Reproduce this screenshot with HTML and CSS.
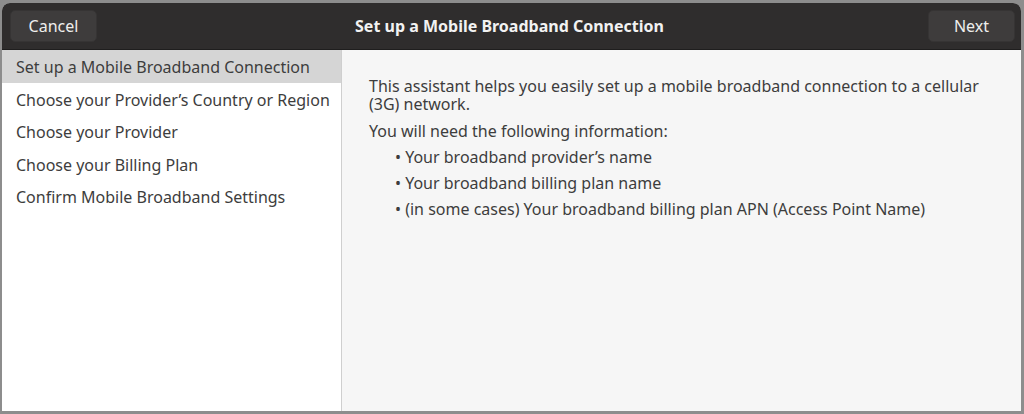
FILE: index.html
```html
<!DOCTYPE html>
<html>
<head>
<meta charset="utf-8">
<link rel="stylesheet" href="styles.css">
</head>
<body>
<div class="window">
  <header class="headerbar">
    <button class="hb-btn">Cancel</button>
    <div class="title">Set up a Mobile Broadband Connection</div>
    <button class="hb-btn">Next</button>
  </header>
  <div class="body">
    <nav class="sidebar">
      <div class="step active">Set up a Mobile Broadband Connection</div>
      <div class="step">Choose your Provider’s Country or Region</div>
      <div class="step">Choose your Provider</div>
      <div class="step">Choose your Billing Plan</div>
      <div class="step">Confirm Mobile Broadband Settings</div>
    </nav>
    <main class="content">
      <p class="intro">This assistant helps you easily set up a mobile broadband connection to a cellular (3G) network.</p>
      <p class="need">You will need the following information:</p>
      <ul class="info">
        <li>• Your broadband provider’s name</li>
        <li>• Your broadband billing plan name</li>
        <li>• (in some cases) Your broadband billing plan APN (Access Point Name)</li>
      </ul>
    </main>
  </div>
</div>
</body>
</html>
```
FILE: styles.css
```css
* { box-sizing: border-box; }
html, body {
  margin: 0;
  height: 100%;
}
body {
  background: #8d8d8d;
  padding: 3px 3px 3px 2px;
  font-family: "Noto Sans", "Open Sans", sans-serif;
  font-size: 16px;
  color: #3d3d3d;
}
.window {
  height: 408px;
  display: flex;
  flex-direction: column;
  border-radius: 8px 8px 0 0;
  overflow: hidden;
  background: #f6f6f6;
}
.headerbar {
  height: 47px;
  flex: none;
  background: #2f2d2d;
  display: flex;
  align-items: center;
  justify-content: space-between;
  padding: 0 6px 0 8px;
  border-bottom: 1px solid #1f1e1e;
}
.hb-btn {
  width: 87px;
  height: 32px;
  background: #3e3c3c;
  border: 1px solid #363434;
  border-radius: 5px;
  color: #eeeeec;
  font-family: inherit;
  font-size: 16px;
  padding: 0;
}
.title {
  color: #f2f2f2;
  font-weight: bold;
  font-size: 16px;
  margin-right: 6px;
}
.body {
  flex: 1;
  display: flex;
}
.sidebar {
  width: 340px;
  background: #ffffff;
  border-right: 1px solid #cfcfcf;
  flex: none;
}
.step {
  height: 32.6px;
  line-height: 32px;
  padding: 1px 0 0 14px;
  white-space: nowrap;
}
.step.active {
  background: #d5d5d5;
}
.content {
  flex: 1;
  padding: 27px 27px;
}
.content p { margin: 0; line-height: 18px; }
.intro { margin-bottom: 9px !important; }
.info {
  list-style: none;
  margin: 0;
  padding: 0 0 0 26px;
}
.info li {
  line-height: 26px;
}
.need { margin-bottom: 4px !important; }
```
